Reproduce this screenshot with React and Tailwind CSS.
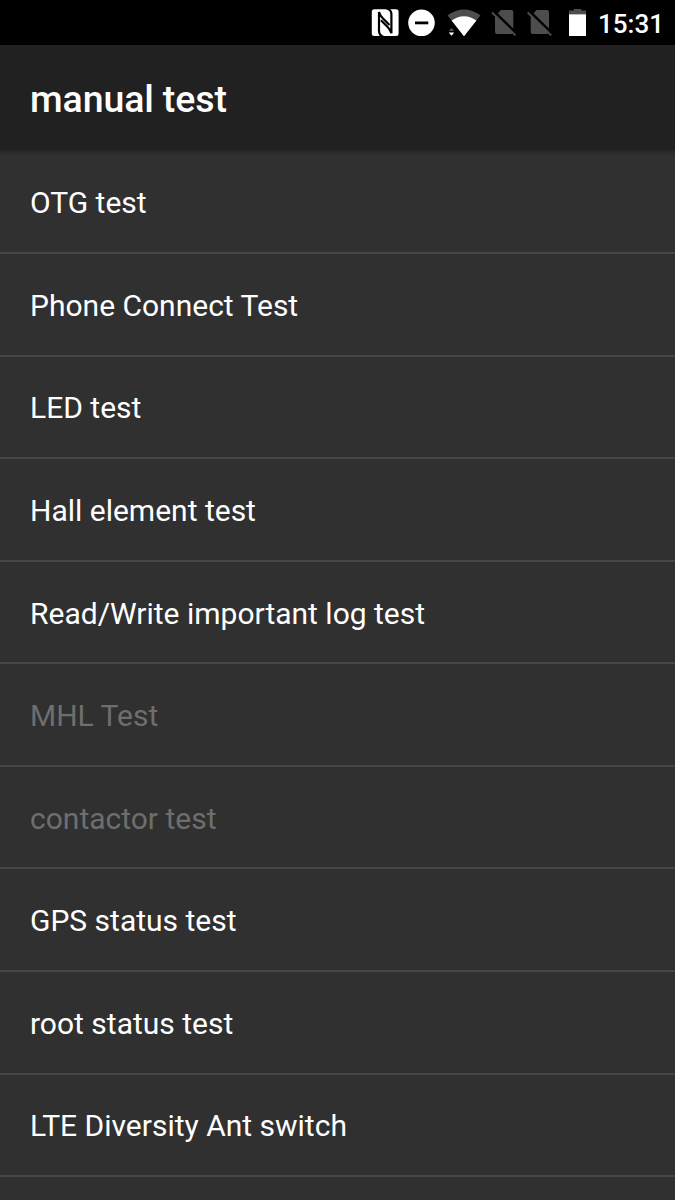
const items = [
  ['OTG test'], ['Phone Connect Test'], ['LED test'], ['Hall element test'],
  ['Read/Write important log test'], ['MHL Test', true], ['contactor test', true],
  ['GPS status test'], ['root status test'], ['LTE Diversity Ant switch'], [''],
];

function StatusIcons() {
  return (
    <svg className="h-[45px] w-[228px]" viewBox="368 0 228 45">
      <rect x="371.800" y="9.200" width="26.800" height="26.800" rx="2.500" fill="#fff" />
      <g fill="none" stroke="#000" strokeWidth="2.200">
        <path d="M384 37Q379 35.500 379 31V12Q380 15.500 383 18.500L389.500 25" />
        <path d="M386.400 8.200Q391.400 9.700 391.400 14.200V33.200Q390.400 29.700 387.400 26.700L380.900 20.200" />
      </g>
      <circle cx="421.500" cy="22.800" r="13.300" fill="#fff" />
      <path d="M415 22.900h13.300" stroke="#000" strokeWidth="2.800" />
      <path d="M447.500 15.200Q464 3.800 480.500 15.200L464 36.300Z" fill="#4d4d4d" />
      <path d="M451.600 20.400Q464 11.900 476.400 20.400L464 36.300Z" fill="#fff" />
      <path d="M448.800 31l2.700-3.200 2.700 3.200z" fill="#4d4d4d" />
      <path d="M448.800 32.600l2.700 3.200 2.700-3.200z" fill="#fff" />
      {[0, 35.7].map((x) => (
        <g key={x} transform={`translate(${x} 0)`}>
          <path d="M501 10h10.300q2 0 2 2v20q0 2-2 2H497q-2 0-2-2V16z" fill="#4d4d4d" />
          <path d="M494 11.500l23 22.400" stroke="#000" strokeWidth="2.600" />
          <path d="M492 12.500l23.500 22.900" stroke="#4d4d4d" strokeWidth="1.900" />
        </g>
      ))}
      <path d="M573.700 9h7.600v1.600h4.700v4h-17v-4h4.700z" fill="#4d4d4d" />
      <path d="M569 14.300h17V36h-17z" fill="#fff" />
    </svg>
  );
}

export default function App() {
  return (
    <div className="flex h-[1200px] w-[675px] flex-col overflow-hidden bg-[#303030] font-['Roboto',sans-serif] text-white">
      <div className="flex h-[45px] shrink-0 items-center justify-end bg-black pr-[11px]">
        <StatusIcons />
        <span className="ml-[2px] pt-[4px] text-[26px] font-medium leading-[45px]">15:31</span>
      </div>
      <header className="z-10 flex h-[105px] shrink-0 items-center bg-[#212121] px-[30px] pt-[5px] shadow-[0_2px_4px_rgba(0,0,0,0.3)]">
        <h1 className="text-[37.500px] font-medium leading-none tracking-[-0.120px]">manual test</h1>
      </header>
      <ul className="pt-[1.600px]">
        {items.map(([name, off], i) => (
          <li key={i} className={`flex h-[102.560px] items-center border-b-2 border-[#464646] px-[30px] pt-[2px] text-[30px] ${off ? 'text-[#6e6e6e]' : ''}`}>{name}</li>
        ))}
      </ul>
    </div>
  );
}
